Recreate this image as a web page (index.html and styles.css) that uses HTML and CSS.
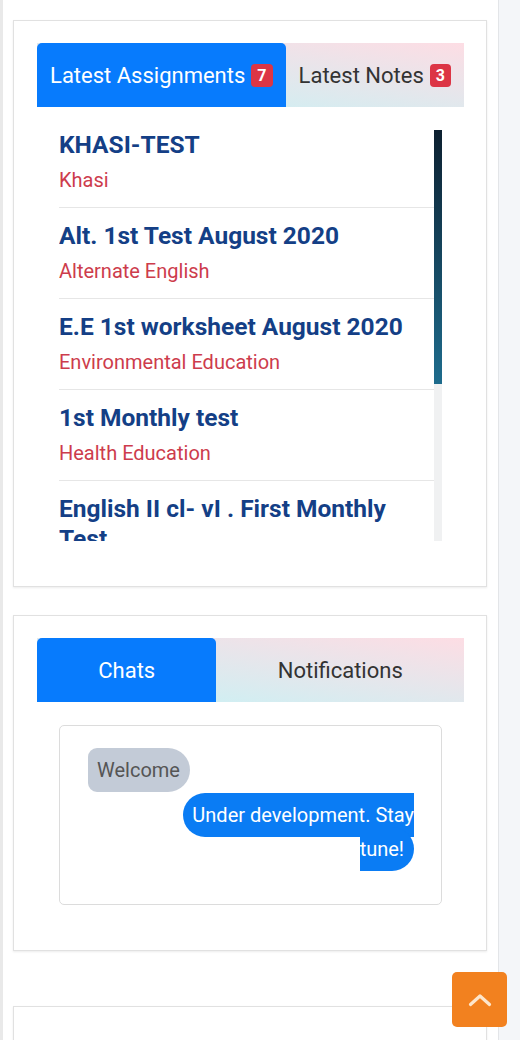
FILE: index.html
```html
<!DOCTYPE html>
<html lang="en">
<head>
<meta charset="utf-8">
<title>Dashboard</title>
<link rel="stylesheet" href="styles.css">
</head>
<body>
<div class="page">
  <main class="column">
    <section class="card">
      <ul class="tabs">
        <li class="tab active">Latest Assignments <span class="badge">7</span></li>
        <li class="tab">Latest Notes <span class="badge">3</span></li>
      </ul>
      <div class="tab-body">
        <div class="list-frame">
          <ul class="list">
            <li class="item"><h3 class="item-title">KHASI-TEST</h3><p class="item-sub">Khasi</p></li>
            <li class="item"><h3 class="item-title">Alt. 1st Test August 2020</h3><p class="item-sub">Alternate English</p></li>
            <li class="item"><h3 class="item-title">E.E 1st worksheet August 2020</h3><p class="item-sub">Environmental Education</p></li>
            <li class="item"><h3 class="item-title">1st Monthly test</h3><p class="item-sub">Health Education</p></li>
            <li class="item"><h3 class="item-title">English II cl- vI . First Monthly Test</h3><p class="item-sub">English II</p></li>
          </ul>
          <div class="scrollbar"><div class="thumb"></div></div>
        </div>
      </div>
    </section>

    <section class="card card-chat">
      <ul class="tabs">
        <li class="tab active">Chats</li>
        <li class="tab">Notifications</li>
      </ul>
      <div class="tab-body">
        <div class="chat-box">
          <div class="msg-in"><span class="bubble-in">Welcome</span></div>
          <div class="msg-out"><span class="bubble-out">Under development. Stay tune!</span></div>
        </div>
      </div>
    </section>

    <section class="card card-empty"></section>
  </main>
  <aside class="rail"></aside>
</div>

<a class="to-top" href="#" aria-label="Back to top">
  <svg width="24" height="14" viewBox="0 0 24 14"><path d="M2.5 11.5 L12 3 L21.5 11.5" fill="none" stroke="#fde6cc" stroke-width="3.2" stroke-linecap="round" stroke-linejoin="round"/></svg>
</a>
</body>
</html>
```
FILE: styles.css
```css
* { box-sizing: border-box; }

html, body {
  margin: 0;
  height: 100%;
  overflow: hidden;
}

body {
  background: #f4f6f9;
  font-family: Roboto, "Noto Sans", sans-serif;
  color: #333;
}

.page {
  display: flex;
  min-height: 100%;
}

.column {
  width: 499px;
  flex: none;
  background: #fff;
  border-left: 3px solid #e9e9e9;
  border-right: 1px solid #e3e5e8;
  padding: 20px 11px 0 10px;
}

.rail {
  flex: 1;
}

.card {
  background: #fff;
  border: 1px solid #e1e1e1;
  box-shadow: 0 1px 2px rgba(0, 0, 0, 0.08);
  padding: 22px 22px 22px 23px;
  margin-bottom: 28px;
}

.card-chat {
  margin-bottom: 55px;
}

.card-empty {
  height: 200px;
}

/* tabs */
.tabs {
  display: flex;
  height: 64px;
  margin: 0;
  padding: 0;
  list-style: none;
  background: linear-gradient(to top right, #c5f3f6, #fddde4);
}

.tab {
  flex: 1 1 auto;
  display: flex;
  align-items: center;
  justify-content: center;
  padding: 0 10px;
  font-size: 22px;
  white-space: nowrap;
  color: #333;
}

.tab.active {
  background: #077bfd;
  color: #fff;
  border-radius: 5px 5px 0 0;
}

.badge {
  display: inline-block;
  margin-left: 6px;
  padding: 3px 6px;
  border-radius: 4px;
  background: #dc3545;
  color: #fff;
  font-size: 16px;
  font-weight: 700;
  line-height: 17px;
}

.tab-body {
  padding: 23px 22px;
}

/* assignment list */
.list-frame {
  display: flex;
  height: 411px;
}

.list {
  flex: 1;
  min-width: 0;
  margin: 0;
  padding: 0;
  list-style: none;
  overflow: hidden;
}

.scrollbar {
  flex: none;
  width: 8px;
  background: #f0f1f2;
}

.thumb {
  height: 254px;
  background: linear-gradient(#0d2030, #1e6c8d);
}

.item {
  padding: 13px 0 12px;
  border-bottom: 1px solid #e6e6e6;
}

.item:first-child {
  padding-top: 0;
}

.item-title {
  margin: 0 0 5px;
  font-size: 24.5px;
  line-height: 30px;
  font-weight: 700;
  color: #143f86;
}

.item-sub {
  margin: 0;
  font-size: 20px;
  line-height: 30px;
  color: #cd3c4c;
}

/* chat */
.chat-box {
  height: 180px;
  border: 1px solid #dcdcdc;
  border-radius: 5px;
  padding: 22px 27px 0 28px;
  font-size: 20px;
}

.msg-in {
  display: flex;
}

.bubble-in {
  background: #c3cbd7;
  color: #555;
  line-height: 24px;
  padding: 10px 10px 10px 9px;
  border-radius: 9px 22px 22px 9px;
}

.msg-out {
  width: 240px;
  margin: 6px 0 0 auto;
  text-align: right;
  line-height: 34px;
}

.bubble-out {
  background: #0a7cf4;
  color: #fff;
  padding: 10px 10px 10px 9px;
  border-radius: 22px;
}

/* back to top */
.to-top {
  position: fixed;
  right: 13px;
  bottom: 13px;
  width: 55px;
  height: 55px;
  border-radius: 5px;
  background: #f2811f;
  display: flex;
  align-items: center;
  justify-content: center;
}
```
